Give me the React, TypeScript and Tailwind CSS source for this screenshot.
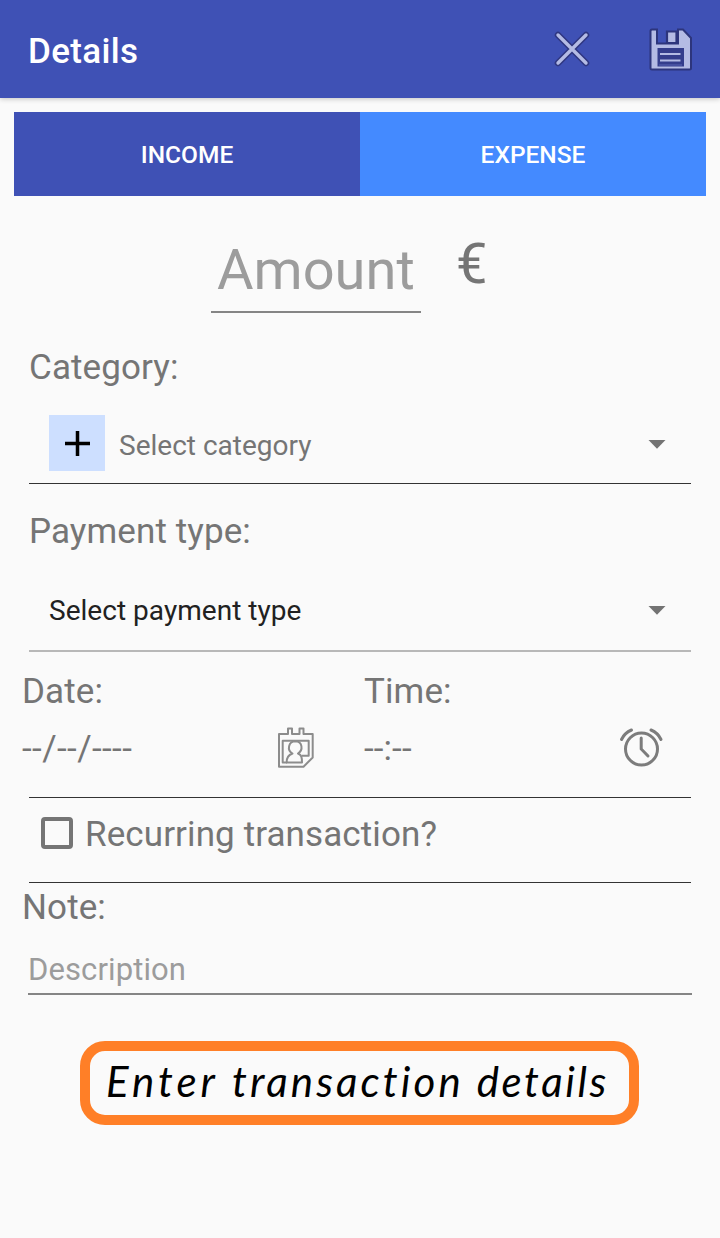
import type { ReactNode } from "react";

function CloseIcon() {
  return (
    <svg width="36" height="36" viewBox="0 0 36 36" fill="none" strokeLinecap="round">
      <path d="M4 4 32 32M32 4 4 32" stroke="#2f3781" strokeWidth="6.500" />
      <path d="M4 4 32 32M32 4 4 32" stroke="#b4bbe4" strokeWidth="3.400" />
    </svg>
  );
}

function SaveIcon() {
  return (
    <svg width="43" height="43" viewBox="0 0 43 43" fill="none">
      <path
        d="M3 1.500H8V15.500H29V1.500H34L42 10V40Q42 41.500 40.500 41.500H3Q1.500 41.500 1.500 40V3Q1.500 1.500 3 1.500Z"
        fill="#b4bbe4"
        stroke="#2d357c"
        strokeWidth="2"
      />
      <path d="M18 3.500H27.500V15H18Z" fill="#b4bbe4" stroke="#2d357c" strokeWidth="2.200" />
      <path d="M8.500 20H35V38.500H8.500Z" fill="#343d8c" />
      <path d="M11 26H31.500M11 32.500H31.500" stroke="#b4bbe4" strokeWidth="2.200" />
      <path d="M10 37H33" stroke="#5964b4" strokeWidth="1" />
    </svg>
  );
}

function CalendarIcon() {
  return (
    <svg width="38" height="42" viewBox="0 0 38 42" fill="none" stroke="#8c8c8c" strokeWidth="2" strokeLinejoin="round">
      <path d="M2 7H11V1.500H15V7H22.500V1.500H26.500V7H35.700V30.500L26.500 39.700H2Z" />
      <path d="M10 35.500H5.700V13.700H31.700V28.700H24.500" />
      <path d="M9.700 35.500C9.500 31 11 28 15.500 26.500C9.500 23 11.500 14.500 18.300 14.300C25.500 14.500 26.500 23 21 26.500C24.500 28 25 30.500 25 35.500Z" />
    </svg>
  );
}

function AlarmIcon() {
  return (
    <svg width="44" height="42" viewBox="0 0 44 42" fill="none" stroke="#7c7c7c" strokeWidth="3" strokeLinecap="round">
      <circle cx="22.500" cy="22" r="16" />
      <path d="M22.200 11V22L29 29M2.500 12.500Q5.500 6 12.500 3M32 3Q39 6 42 12.500" />
    </svg>
  );
}

function Caret() {
  return (
    <svg width="18" height="9" viewBox="0 0 18 9" fill="#737373">
      <path d="M.5 0H17.500L9 8.800Z" />
    </svg>
  );
}

function Label({ children }: { children: ReactNode }) {
  return <div className="text-[35px] leading-[40px] tracking-[0.1px]">{children}</div>;
}

export default function App() {
  return (
    <main className="flex h-[1238px] w-[720px] flex-col overflow-hidden bg-[#fafafa] font-['Roboto',sans-serif] whitespace-nowrap text-[#757575]">
      <header className="flex h-[98px] shrink-0 items-center bg-[#3f51b5] pr-7 pl-7 text-white shadow-[0_1px_5px_rgba(0,0,0,0.22)]">
        <h1 className="flex-1 pt-[5px] text-[35px] leading-[40px] font-medium tracking-[0.35px]">Details</h1>
        <button className="mr-[59px]" aria-label="Close"><CloseIcon /></button>
        <button aria-label="Save"><SaveIcon /></button>
      </header>

      <div className="mx-3.5 mt-3.5 grid h-[84px] shrink-0 grid-cols-2 text-[24.5px] font-medium text-white">
        <button className="bg-[#3f51b5] pt-[3px]">INCOME</button>
        <button className="bg-[#448aff] pt-[3px]">EXPENSE</button>
      </div>

      <div className="flex h-[152px] shrink-0 items-start pl-[211px]">
        <div className="mt-[38px] h-[79px] w-[210px] border-b-2 border-[#858585] pl-1.5 text-[56px] leading-[72px] text-[#9c9c9c]">Amount</div>
        <div className="mt-8 ml-[35px] text-[56px] leading-[72px]">€</div>
      </div>

      <section className="ml-[29px] h-[136px] w-[662px] shrink-0 border-b border-[#333]">
        <Label>Category:</Label>
        <div className="mt-[27px] flex h-14 items-center pr-[25px] pl-5">
          <div className="flex size-14 items-center justify-center bg-[#cddfff]">
            <svg width="25" height="25" viewBox="0 0 25 25" stroke="#000" strokeWidth="3.500">
              <path d="M0 12.500H25M12.500 0V25" />
            </svg>
          </div>
          <span className="flex-1 pt-[5px] pl-3.5 text-[28px]">Select category</span>
          <div className="pt-0.5"><Caret /></div>
        </div>
      </section>

      <section className="mt-7 ml-[29px] h-[140px] w-[662px] shrink-0 border-b-2 border-[#b8b8b8]">
        <Label>Payment type:</Label>
        <div className="mt-[29px] flex h-14 items-center pr-[25px] pl-5">
          <span className="flex-1 pt-1 text-[28px] tracking-[0.03px] text-[#212121]">Select payment type</span>
          <div className="pt-0.5"><Caret /></div>
        </div>
      </section>

      <section className="mt-5 ml-[29px] h-[126px] w-[662px] shrink-0 border-b border-[#333]">
        <div className="-ml-[7px] grid grid-cols-[342px_327px]">
          <div>
            <Label>Date:</Label>
            <div className="mt-[15px] flex h-[42px] items-center pr-[49px]">
              <span className="flex-1 pt-[3px] text-[35px] tracking-[0.4px]">--/--/----</span>
              <CalendarIcon />
            </div>
          </div>
          <div>
            <Label>Time:</Label>
            <div className="mt-[15px] flex h-[42px] items-center pr-7">
              <span className="flex-1 pt-[3px] text-[35px] tracking-[0.1px]">--:--</span>
              <AlarmIcon />
            </div>
          </div>
        </div>
      </section>

      <section className="ml-[29px] flex h-[85px] w-[662px] shrink-0 items-start border-b border-[#333] pt-[17px] pl-3">
        <div className="mt-0.5 size-8 rounded-[4px] border-[4px] border-[#757575]" />
        <div className="ml-3"><Label>Recurring transaction?</Label></div>
      </section>

      <section className="mt-[5px] shrink-0 pr-7 pl-[22px]">
        <Label>Note:</Label>
        <div className="mt-[22px] ml-1.5 h-[45px] border-b-2 border-[#858585] text-[31px] leading-[40px] tracking-[0.1px] text-[#9c9c9c]">Description</div>
      </section>

      <div className="mt-[46px] ml-20 flex h-[84px] w-[559px] shrink-0 items-center rounded-[25px] border-[10px] border-[#ff7f27] pb-1 pl-4 font-['Lato',sans-serif] text-[42px] text-black italic">
        <p>
          <span className="tracking-[4px]">Enter </span>
          <span className="tracking-[3.1px]">transaction </span>
          <span className="tracking-[2.6px]">details</span>
        </p>
      </div>
    </main>
  );
}
